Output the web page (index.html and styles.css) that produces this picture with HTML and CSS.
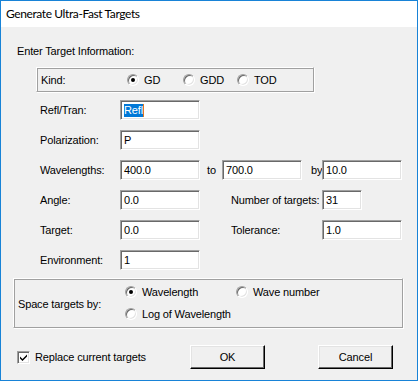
FILE: index.html
```html
<!DOCTYPE html>
<html lang="en">
<head>
  <meta charset="UTF-8">
  <title>Generate Ultra-Fast Targets</title>
  <link rel="stylesheet" href="styles.css">
</head>
<body>

  <div class="window">
    <div class="titlebar">Generate Ultra-Fast Targets</div>

    <div class="dialog">
      <div class="intro">Enter Target Information:</div>

      <div class="kind-box">
        <span class="kind-label">Kind:</span>
        <span class="radio checked"></span><span class="radio-text opt-gd">GD</span>
        <span class="radio"></span><span class="radio-text opt-gdd">GDD</span>
        <span class="radio"></span><span class="radio-text">TOD</span>
      </div>

      <div class="fields">
        <div class="row">
          <span class="lbl">Refl/Tran:</span>
          <span class="field"><span class="selected">Refl</span><span class="caret"></span></span>
        </div>
        <div class="row">
          <span class="lbl">Polarization:</span>
          <span class="field">P</span>
        </div>
        <div class="row">
          <span class="lbl">Wavelengths:</span>
          <span class="field">400.0</span>
          <span class="lbl-to">to</span>
          <span class="field">700.0</span>
          <span class="lbl-by">by</span>
          <span class="field">10.0</span>
        </div>
        <div class="row">
          <span class="lbl">Angle:</span>
          <span class="field">0.0</span>
          <span class="lbl-right">Number of targets:</span>
          <span class="field small">31</span>
        </div>
        <div class="row">
          <span class="lbl">Target:</span>
          <span class="field">0.0</span>
          <span class="lbl-right">Tolerance:</span>
          <span class="field">1.0</span>
        </div>
        <div class="row">
          <span class="lbl">Environment:</span>
          <span class="field">1</span>
        </div>
      </div>

      <div class="space-box">
        <span class="space-label">Space targets by:</span>
        <div class="space-options">
          <div class="space-line">
            <span class="radio checked"></span><span class="radio-text opt-wave">Wavelength</span>
            <span class="radio"></span><span class="radio-text">Wave number</span>
          </div>
          <div class="space-line">
            <span class="radio"></span><span class="radio-text">Log of Wavelength</span>
          </div>
        </div>
      </div>

      <div class="footer">
        <span class="checkbox">
          <svg width="9" height="9" viewBox="0 0 9 9"><path d="M1 3.5 L3.5 6 L8 1.5 L8 3.5 L3.5 8 L1 5.5 Z" fill="#000"/></svg>
        </span>
        <span class="check-text">Replace current targets</span>
        <span class="button">OK</span>
        <span class="button cancel">Cancel</span>
      </div>
    </div>
  </div>

</body>
</html>
```

FILE: styles.css
```css
html, body {
  margin: 0;
  background: #f0f0f0;
}

.window {
  width: 418px;
  height: 381px;
  box-sizing: border-box;
  border: 1px solid #1883d7;
  background: #f0f0f0;
  font-family: "Liberation Sans", Arial, sans-serif;
  font-size: 11px;
  letter-spacing: -0.15px;
  color: #000;
  white-space: nowrap;
}

.titlebar {
  height: 26px;
  background: #fff;
  padding-left: 5px;
  font-family: Lato, "Open Sans", sans-serif;
  font-size: 12px;
  letter-spacing: -0.4px;
  line-height: 26px;
  color: #000;
}

.dialog {
  display: flex;
  flex-direction: column;
  align-items: flex-start;
}

.dialog span {
  flex: none;
}

.intro {
  margin: 18px 0 0 16px;
  line-height: 13px;
}

/* group boxes */
.kind-box {
  margin: 9px 0 0 35px;
  width: 278px;
  height: 25px;
  box-sizing: border-box;
  border: 1px solid;
  border-color: #fff #a0a0a0 #a0a0a0 #fff;
  box-shadow: inset 1px 1px #a0a0a0, 1px 1px #fff;
  display: flex;
  align-items: center;
  padding-left: 4px;
}

.kind-label {
  width: 86px;
}

.opt-gd {
  width: 39px;
}

.opt-gdd {
  width: 37px;
}

/* radio buttons */
.radio {
  display: inline-block;
  width: 12px;
  height: 12px;
  box-sizing: border-box;
  border-radius: 50%;
  border: 1px solid;
  border-color: #a0a0a0 #fff #fff #a0a0a0;
  background: #fff;
  box-shadow: inset 1px 1px #696969, inset -1px -1px #e3e3e3;
  position: relative;
}

.radio.checked::after {
  content: "";
  position: absolute;
  left: 3px;
  top: 3px;
  width: 4px;
  height: 4px;
  border-radius: 50%;
  background: #000;
}

.radio-text {
  margin-left: 5px;
}

/* field rows */
.fields {
  margin: 8px 0 0 39px;
  display: flex;
  flex-direction: column;
  gap: 10px;
}

.row {
  display: flex;
  align-items: center;
  height: 20px;
}

.lbl {
  width: 80px;
}

.field {
  width: 80px;
  height: 20px;
  box-sizing: border-box;
  background: #fff;
  border: 1px solid;
  border-color: #a0a0a0 #fff #fff #a0a0a0;
  box-shadow: inset 1px 1px #696969, inset -1px -1px #e3e3e3;
  padding: 0 0 0 3px;
  display: flex;
  align-items: center;
}

.field.small {
  width: 40px;
}

.selected {
  background: #0078d7;
  color: #fff;
  line-height: 13px;
}

.caret {
  width: 1px;
  height: 13px;
  background: #e07820;
}

.lbl-to {
  margin-left: 7px;
  width: 15px;
}

.lbl-by {
  margin-left: 9px;
  width: 11px;
}

.lbl-right {
  margin-left: 31px;
  width: 91px;
}

/* space targets group */
.space-box {
  margin: 8px 0 0 12px;
  width: 390px;
  height: 50px;
  box-sizing: border-box;
  border: 1px solid;
  border-color: #fff #a0a0a0 #a0a0a0 #fff;
  box-shadow: inset 1px 1px #a0a0a0, 1px 1px #fff;
  display: flex;
  align-items: center;
}

.space-label {
  margin-left: 4px;
  width: 107px;
  margin-top: 1px;
}

.space-options {
  display: flex;
  flex-direction: column;
  gap: 10px;
}

.space-line {
  display: flex;
  align-items: center;
  height: 12px;
}

.opt-wave {
  width: 94px;
}

/* footer */
.footer {
  margin: 17px 0 0 16px;
  display: flex;
  align-items: center;
  height: 24px;
}

.checkbox {
  width: 13px;
  height: 13px;
  box-sizing: border-box;
  border: 1px solid;
  border-color: #a0a0a0 #fff #fff #a0a0a0;
  box-shadow: inset 1px 1px #696969, inset -1px -1px #e3e3e3;
  background: #fff;
  display: flex;
  align-items: center;
  justify-content: center;
}

.check-text {
  margin-left: 5px;
  width: 155px;
}

.button {
  width: 75px;
  height: 24px;
  box-sizing: border-box;
  border: 1px solid;
  border-color: #fff #000 #000 #fff;
  box-shadow: inset -1px -1px #696969, inset 1px 1px #e3e3e3;
  background: #f0f0f0;
  display: flex;
  align-items: center;
  justify-content: center;
}

.cancel {
  margin-left: 53px;
}
```
